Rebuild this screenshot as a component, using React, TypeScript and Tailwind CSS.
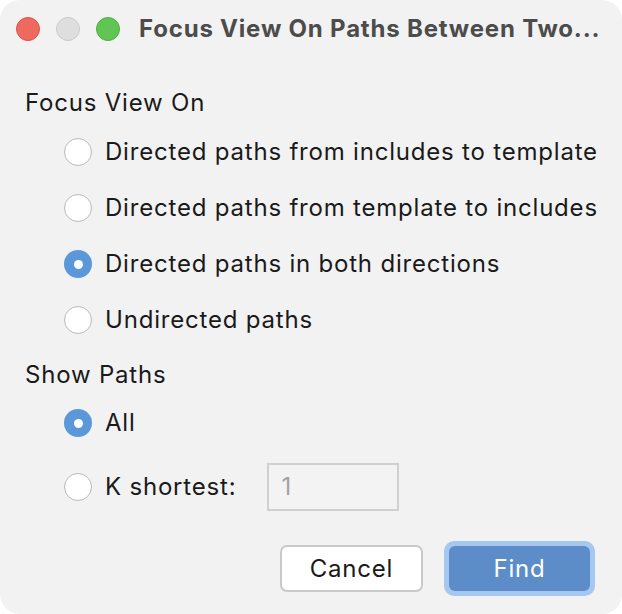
import React from "react";

function Radio({ checked }: { checked?: boolean }) {
  if (checked) {
    return (
      <div className="w-[28px] h-[28px] rounded-full bg-[#5b98da] flex items-center justify-center shrink-0">
        <div className="w-[9px] h-[9px] rounded-full bg-white" />
      </div>
    );
  }
  return <div className="w-[28px] h-[28px] rounded-full bg-white border-[1.5px] border-[#b9b9b9] shrink-0" />;
}

function Row({ label, checked, h = "h-[56px]", children }: { label: string; checked?: boolean; h?: string; children?: React.ReactNode }) {
  return (
    <div className={`flex items-center ${h} ml-[39px]`}>
      <Radio checked={checked} />
      <span className="ml-[13px] text-[24px] tracking-[0.8px] text-[#1a1a1a]">{label}</span>
      {children}
    </div>
  );
}

export default function App() {
  return (
    <div className="w-[622px] h-[614px] bg-white" style={{ fontFamily: "Inter, 'Liberation Sans', sans-serif" }}>
      <div className="w-[622px] h-[614px] bg-[#f2f2f2] rounded-[20px] flex flex-col overflow-hidden">
        <div className="h-[58px] flex items-center pl-[16px] shrink-0">
          <div className="w-[24px] h-[24px] rounded-full bg-[#ee6a5f] border border-[#d9534a]" />
          <div className="w-[24px] h-[24px] rounded-full bg-[#dedede] border border-[#c9c9c9] ml-[16px]" />
          <div className="w-[24px] h-[24px] rounded-full bg-[#61c554] border border-[#4fad43] ml-[16px]" />
          <span className="ml-[19px] text-[24px] tracking-[0.8px] font-bold text-[#4c4c4c] whitespace-nowrap">Focus View On Paths Between Two...</span>
        </div>
        <div className="pl-[25px] flex flex-col">
          <div className="h-[32px] mt-[29px] mb-[5px] flex items-center text-[24px] tracking-[0.8px] text-[#1a1a1a]">Focus View On</div>
          <Row label="Directed paths from includes to template" />
          <Row label="Directed paths from template to includes" />
          <Row label="Directed paths in both directions" checked />
          <Row label="Undirected paths" />
          <div className="h-[32px] mt-[11px] flex items-center text-[24px] tracking-[0.8px] text-[#1a1a1a]">Show Paths</div>
          <div className="mt-[4px]">
            <Row label="All" checked />
          </div>
          <div className="mt-[4px]">
            <Row label="K shortest:" h="h-[64px]">
              <div className="ml-[31px] w-[132px] h-[48px] border-2 border-[#d0d0d0] bg-[#f3f3f3] flex items-center pl-[12px] text-[24px] text-[#a3a3a3]">1</div>
            </Row>
          </div>
        </div>
        <div className="flex justify-end items-center pr-[27px] mt-[22px]">
          <div className="w-[143px] h-[47px] bg-white border-2 border-[#c9c9c9] rounded-[7px] flex items-center justify-center text-[24px] tracking-[0.8px] text-[#1a1a1a]">Cancel</div>
          <div className="ml-[21px] w-[151px] h-[55px] rounded-[10px] bg-[#a6c8f0] p-[5px]">
            <div className="w-full h-full rounded-[6px] bg-[#5c8dc9] flex items-center justify-center text-[24px] tracking-[0.8px] text-white">Find</div>
          </div>
        </div>
      </div>
    </div>
  );
}
